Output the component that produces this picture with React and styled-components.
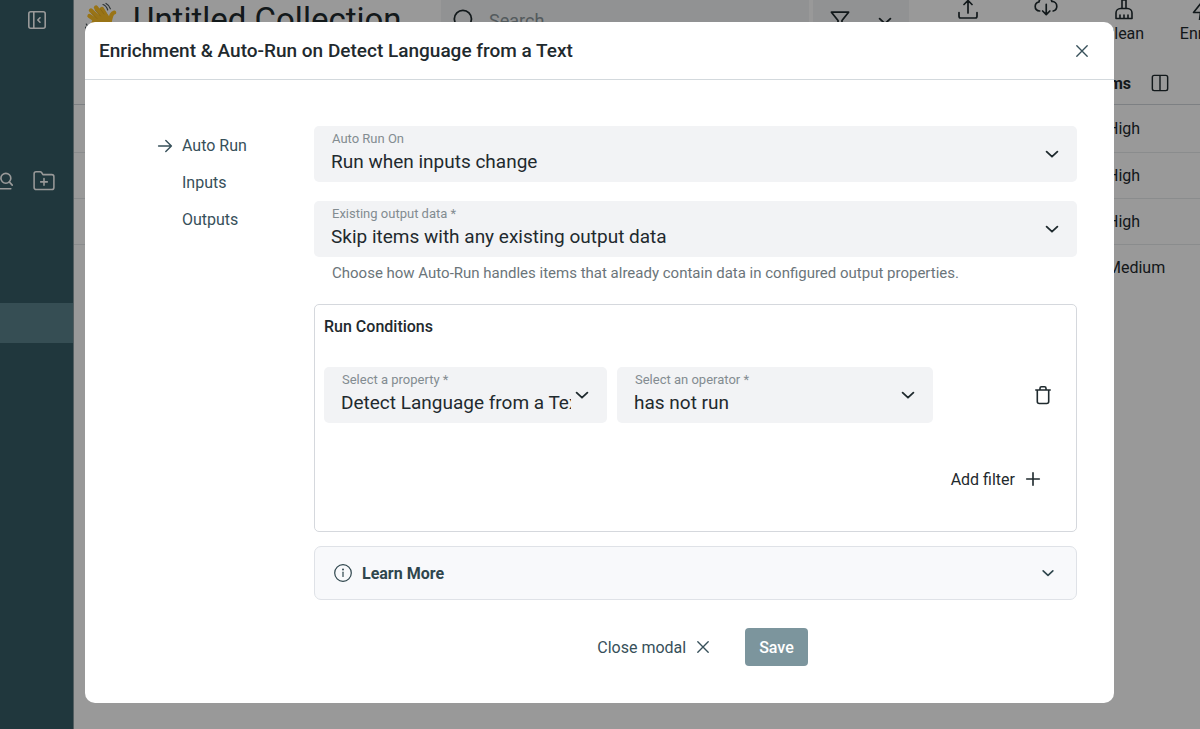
import React from 'react';
import styled, { createGlobalStyle } from 'styled-components';

const GlobalStyle = createGlobalStyle`
  * {
    box-sizing: border-box;
  }

  body {
    margin: 0;
    overflow: hidden;
    background: #ffffff;
    color: #1f2a2e;
    font-family: Roboto, "Liberation Sans", sans-serif;
    font-size: 16px;
  }

  button, select, input {
    font-family: inherit;
    font-size: inherit;
    color: inherit;
    border: none;
    background: none;
    padding: 0;
    margin: 0;
  }

  svg {
    display: block;
    flex-shrink: 0;
  }
`;

/* ---------- page behind the modal ---------- */

const Page = styled.div`
  display: flex;
  height: 100vh;
  overflow: hidden;
`;

const Sidebar = styled.aside`
  flex: 0 0 74px;
  overflow: hidden;
  background: #365d66;
  color: #ffffff;
  border-right: 1px solid #8b9da2;
`;

const CollapseButton = styled.button`
  display: block;
  margin: 10px 0 0 27px;
`;

const SidebarTools = styled.div`
  display: flex;
  justify-content: flex-end;
  gap: 20px;
  margin-top: 140px;
  padding-right: 18px;
`;

const SidebarItem = styled.a`
  display: block;
  height: 40px;
  margin-top: 111px;
  background: #5a828c;
`;

const Main = styled.main`
  flex: 1;
  min-width: 0;
  overflow: hidden;
`;

const TopBar = styled.header`
  display: flex;
  height: 62px;
  padding-left: 11px;
`;

const Heading = styled.div`
  display: flex;
  align-items: flex-start;
  gap: 14px;
  flex: 1;
  padding-top: 2px;
  white-space: nowrap;
`;

const PageTitle = styled.h1`
  margin: 0;
  font-size: 33px;
  line-height: 36px;
  font-weight: 400;
`;

const SearchBox = styled.label`
  display: flex;
  align-items: center;
  gap: 14px;
  width: 368px;
  height: 40px;
  padding-left: 12px;
  background: #f2f3f5;
`;

const SearchInput = styled.input`
  flex: 1;
  min-width: 0;
  font-size: 18px;

  &::placeholder {
    color: #8b979b;
    opacity: 1;
  }
`;

const FilterButton = styled.button`
  display: flex;
  align-items: center;
  gap: 24px;
  width: 96px;
  height: 42px;
  margin-left: 4px;
  padding-left: 16px;
  background: #f2f3f5;
`;

const Actions = styled.div`
  display: flex;
  width: 291px;
  padding-left: 20px;
`;

const ActionButton = styled.button`
  display: flex;
  flex: 0 0 78px;
  flex-direction: column;
  align-items: center;
  justify-content: flex-end;
  gap: 4px;
  height: 44px;
  line-height: 20px;
`;

const ListBar = styled.div`
  display: flex;
  align-items: center;
  justify-content: flex-end;
  gap: 20px;
  height: 43px;
  padding-right: 31px;
  border-bottom: 1px solid #d0d5da;
`;

const ItemCount = styled.span`
  font-weight: 700;
`;

const ListTable = styled.table`
  width: 100%;
  margin-top: 1px;
  border-collapse: collapse;

  td {
    height: 46px;
    padding: 0;
    border-bottom: 1px solid #e6e9eb;
  }

  tr:last-child td {
    border-bottom: none;
  }

  td:last-child {
    width: 93px;
  }
`;

/* ---------- modal ---------- */

const Overlay = styled.div`
  position: fixed;
  inset: 0;
  display: flex;
  align-items: flex-start;
  padding: 22px 86px 0 85px;
  background: rgba(0, 0, 0, 0.4);
`;

const Modal = styled.section`
  flex: 1;
  min-width: 0;
  background: #ffffff;
  border-radius: 10px;
`;

const ModalHeader = styled.header`
  display: flex;
  align-items: center;
  justify-content: space-between;
  height: 58px;
  padding: 0 24px 0 14px;
  border-bottom: 1px solid #d3d9dd;
`;

const ModalTitle = styled.h2`
  margin: 0;
  font-size: 19px;
  font-weight: 500;
`;

const IconButton = styled.button`
  display: grid;
  place-items: center;
  color: ${(props) => props.$color || '#1f2a2e'};
`;

const ModalBody = styled.div`
  display: grid;
  grid-template-columns: 157px 1fr;
  padding: 46px 37px 37px 72px;
`;

const Steps = styled.nav`
  padding-top: 1px;
  color: #37505a;
`;

const StepLink = styled.a`
  display: grid;
  grid-template-columns: 16px 1fr;
  align-items: center;
  gap: 9px;
  height: 37px;
  color: inherit;
  text-decoration: none;

  span {
    grid-column: 2;
  }
`;

const FormColumn = styled.div`
  display: flex;
  flex-direction: column;
  min-width: 0;
`;

const FieldBox = styled.div`
  position: relative;
  height: 56px;
  margin-bottom: ${(props) => props.$gap || 0}px;
  border-radius: 5px;
  background: #f2f3f5;

  label {
    position: absolute;
    top: 5px;
    left: 18px;
    color: #838c91;
    font-size: 13px;
    line-height: 16px;
    pointer-events: none;
  }

  select {
    display: block;
    width: 100%;
    height: 56px;
    padding: 15px 36px 0 17px;
    appearance: none;
    font-size: 19px;
  }

  svg {
    position: absolute;
    top: 18px;
    right: 15px;
    pointer-events: none;
  }
`;

const Hint = styled.p`
  margin: 6px 0 21px 18px;
  color: #6b757a;
  font-size: 15px;
  line-height: 20px;
`;

const Conditions = styled.fieldset`
  min-width: 0;
  margin: 0 0 14px;
  padding: 12px 9px 32px;
  border: 1px solid #d5d8dd;
  border-radius: 5px;
`;

const ConditionsTitle = styled.h3`
  margin: 0 0 30px;
  font-size: 16px;
  line-height: 20px;
  font-weight: 500;
`;

const ConditionRow = styled.div`
  display: grid;
  grid-template-columns: 283fr 316fr 124fr;
  align-items: center;
  gap: 10px;
`;

const RemoveCell = styled.div`
  display: flex;
  justify-content: flex-end;
  padding-right: 14px;
`;

const AddFilter = styled.button`
  display: flex;
  align-items: center;
  gap: 9px;
  height: 40px;
  margin: 36px 25px 0 auto;
`;

const LearnMore = styled.button`
  display: flex;
  align-items: center;
  height: 54px;
  padding: 0 19px 0 18px;
  border: 1px solid #dfe2e7;
  border-radius: 7px;
  background: #f8f9fb;
  color: #2f464d;
  font-weight: 700;

  span {
    margin: 0 auto 0 9px;
  }
`;

const ModalFooter = styled.footer`
  display: flex;
  justify-content: center;
  gap: 22px;
  margin-top: 28px;
`;

const CloseButton = styled.button`
  display: flex;
  align-items: center;
  gap: 9px;
  height: 38px;
  padding: 0 12px 0 14px;
  color: #37505a;
`;

const SaveButton = styled.button`
  height: 38px;
  padding: 0 14px;
  border-radius: 4px;
  background: #7c959d;
  color: #ffffff;
  font-weight: 500;
`;

/* ---------- icons ---------- */

const Icon = ({ size = 20, stroke = 1.5, children, ...rest }) => (
  <svg
    width={size}
    height={size}
    viewBox="0 0 20 20"
    fill="none"
    stroke="currentColor"
    strokeWidth={stroke}
    strokeLinecap="round"
    strokeLinejoin="round"
    aria-hidden="true"
    {...rest}
  >
    {children}
  </svg>
);

const ChevronDown = (props) => (
  <Icon stroke={1.8} {...props}>
    <path d="M4.600 7.600 10 12.700l5.400-5.100" />
  </Icon>
);

const CrossIcon = (props) => (
  <Icon size={16} stroke={1.7} {...props}>
    <path d="M3.500 3.500l13 13M16.500 3.500l-13 13" />
  </Icon>
);

const WaveIcon = () => (
  <svg width="34" height="32" viewBox="0 0 34 32" fill="none" strokeLinecap="round" aria-hidden="true">
    <g stroke="#ffc226" strokeWidth="4.4">
      <path d="M12 19 4.500 14M15 17 6 8.500M18.500 15.500 11 5.500M22 15.500 17 7" />
      <path d="M25 19c1-5 1.500-8 4.300-8.500" strokeWidth="4" />
    </g>
    <path d="M8 17 20 9l6 8c2 5-1 12-7 13-4 1-7-2-13-9z" fill="#ffc226" />
    <path d="M12 16.500 7 11.500M15.500 14 10 8M19 12 15 6.500" stroke="#e0a31c" strokeWidth="0.700" />
    <path d="M18 2.500c2.300.8 4 3 4.700 5.500M21 1.500c2 1 3.700 3 4.400 5.300M1.300 22c.8 2 2 3.600 4 4.700M.2 25c.6 1.500 1.500 2.600 3 3.500" stroke="#4a5459" strokeWidth="1.200" />
  </svg>
);

/* ---------- parts ---------- */

const Field = ({ id, label, value, gap }) => (
  <FieldBox $gap={gap}>
    <label htmlFor={id}>{label}</label>
    <select id={id} defaultValue={value}>
      <option value={value}>{value}</option>
    </select>
    <ChevronDown />
  </FieldBox>
);

const priorities = ['High', 'High', 'High', 'Medium'];

const Background = () => (
  <Page>
    <Sidebar>
      <CollapseButton aria-label="Collapse sidebar">
        <Icon stroke={1.6}>
          <rect x="1.800" y="1.800" width="16.400" height="16.400" rx="2" />
          <path d="M6.800 2v16M13 7.800 10.800 10l2.200 2.200" />
        </Icon>
      </CollapseButton>
      <SidebarTools>
        <Icon size={22} stroke={1.5}>
          <circle cx="13.500" cy="7.500" r="4.500" />
          <path d="M16.800 11l2.500 2.700M1 17h17M1 5h5M1 11h5" />
        </Icon>
        <Icon size={22} stroke={1.4}>
          <path d="M1 3.500C1 2.400 1.800 1.600 2.900 1.600h3.600c.6 0 1 .3 1.300.700l1.200 1.900h8c1.100 0 2 .8 2 1.900v9.700c0 1.100-.9 2-2 2H2.900C1.800 17.800 1 16.900 1 15.800zM10 7.800v6M7 10.800h6" />
        </Icon>
      </SidebarTools>
      <SidebarItem href="#collection" aria-label="Untitled Collection" />
    </Sidebar>

    <Main>
      <TopBar>
        <Heading>
          <WaveIcon />
          <PageTitle>Untitled Collection</PageTitle>
        </Heading>
        <SearchBox>
          <Icon size={22} stroke={1.6}>
            <circle cx="9" cy="9" r="7.800" />
            <path d="M15 15l4 4" />
          </Icon>
          <SearchInput type="search" placeholder="Search" />
        </SearchBox>
        <FilterButton aria-label="Filter">
          <Icon size={22} stroke={1.6}>
            <path d="M2.200 2h15.600l-6 7.500v7l-3.600-2v-5z" />
          </Icon>
          <ChevronDown />
        </FilterButton>
        <Actions>
          <ActionButton>
            <Icon stroke={1.7}>
              <path d="M10 13V1M6 4.500 10 .5l4 4M1 12.500v3.800c0 1 .8 1.700 1.700 1.700h14.600c1 0 1.700-.8 1.700-1.700v-3.800" />
            </Icon>
            Import
          </ActionButton>
          <ActionButton>
            <Icon size={24} stroke={1.4}>
              <path d="M4.800 12.500C2.600 12.300 1 10.900 1 8.700 1 6.800 2.300 5.300 4.100 5 4.700 2.300 6.800.5 9.500.5c2.600 0 4.700 1.600 5.400 4 2.300 0 4.100 1.800 4.100 4.100 0 2-1.200 3.500-3 3.900M10.200 7v8.300M7.200 12.500l3 3 3-3" />
            </Icon>
            Export
          </ActionButton>
          <ActionButton>
            <Icon stroke={1.6}>
              <path d="M8 8V0h4v8M2 18.500v-5.500C2 10.500 4 8.500 6.500 8.500h7c2.500 0 4.500 2 4.500 4.500v5.500zM6 18v-3M10 18v-3M14 18v-3" />
            </Icon>
            Clean
          </ActionButton>
          <ActionButton>
            <Icon stroke={1.6}>
              <path d="M11.500 0 1.500 12.500h7L7.500 20l10-11.500h-7z" />
            </Icon>
            Enrich
          </ActionButton>
        </Actions>
      </TopBar>

      <ListBar>
        <ItemCount>4 items</ItemCount>
        <Icon size={18} stroke={1.6}>
          <rect x="1.500" y="1.500" width="17" height="17" rx="2" />
          <path d="M10 2v16" />
        </Icon>
      </ListBar>
      <ListTable>
        <tbody>
          {priorities.map((priority, i) => (
            <tr key={i}>
              <td />
              <td>{priority}</td>
            </tr>
          ))}
        </tbody>
      </ListTable>
    </Main>
  </Page>
);

const App = () => (
  <>
    <GlobalStyle />
    <Background />
    <Overlay>
      <Modal role="dialog" aria-modal="true" aria-labelledby="modal-title">
        <ModalHeader>
          <ModalTitle id="modal-title">
            Enrichment &amp; Auto-Run on Detect Language from a Text
          </ModalTitle>
          <IconButton aria-label="Close" $color="#37505a">
            <CrossIcon />
          </IconButton>
        </ModalHeader>

        <ModalBody>
          <Steps>
            <StepLink href="#auto-run">
              <Icon size={16} stroke={1.8}>
                <path d="M2 10h16M11 3l7 7-7 7" />
              </Icon>
              <span>Auto Run</span>
            </StepLink>
            <StepLink href="#inputs">
              <span>Inputs</span>
            </StepLink>
            <StepLink href="#outputs">
              <span>Outputs</span>
            </StepLink>
          </Steps>

          <FormColumn>
            <Field id="auto-run-on" label="Auto Run On" value="Run when inputs change" gap={19} />
            <Field
              id="existing-output"
              label="Existing output data *"
              value="Skip items with any existing output data"
            />
            <Hint>
              Choose how Auto-Run handles items that already contain data in configured output properties.
            </Hint>

            <Conditions>
              <ConditionsTitle>Run Conditions</ConditionsTitle>
              <ConditionRow>
                <Field id="property" label="Select a property *" value="Detect Language from a Text" />
                <Field id="operator" label="Select an operator *" value="has not run" />
                <RemoveCell>
                  <IconButton aria-label="Remove filter">
                    <Icon stroke={1.6}>
                      <path d="M2.800 5h14.400M4.300 5v11.500c0 1.200.8 2 2 2h7.400c1.200 0 2-.8 2-2V5M7 4.800V3.300c0-.9.600-1.500 1.500-1.500h3c.9 0 1.500.6 1.500 1.500v1.500" />
                    </Icon>
                  </IconButton>
                </RemoveCell>
              </ConditionRow>
              <AddFilter type="button">
                Add filter
                <Icon size={18} stroke={1.8}>
                  <path d="M10 3v14M3 10h14" />
                </Icon>
              </AddFilter>
            </Conditions>

            <LearnMore type="button">
              <Icon stroke={1.2}>
                <circle cx="10" cy="10" r="8.300" />
                <path d="M10 9.200v4.200" />
                <circle cx="10" cy="6.600" r="0.400" />
              </Icon>
              <span>Learn More</span>
              <ChevronDown size={18} />
            </LearnMore>

            <ModalFooter>
              <CloseButton type="button">
                Close modal
                <CrossIcon />
              </CloseButton>
              <SaveButton type="button">Save</SaveButton>
            </ModalFooter>
          </FormColumn>
        </ModalBody>
      </Modal>
    </Overlay>
  </>
);

export default App;
